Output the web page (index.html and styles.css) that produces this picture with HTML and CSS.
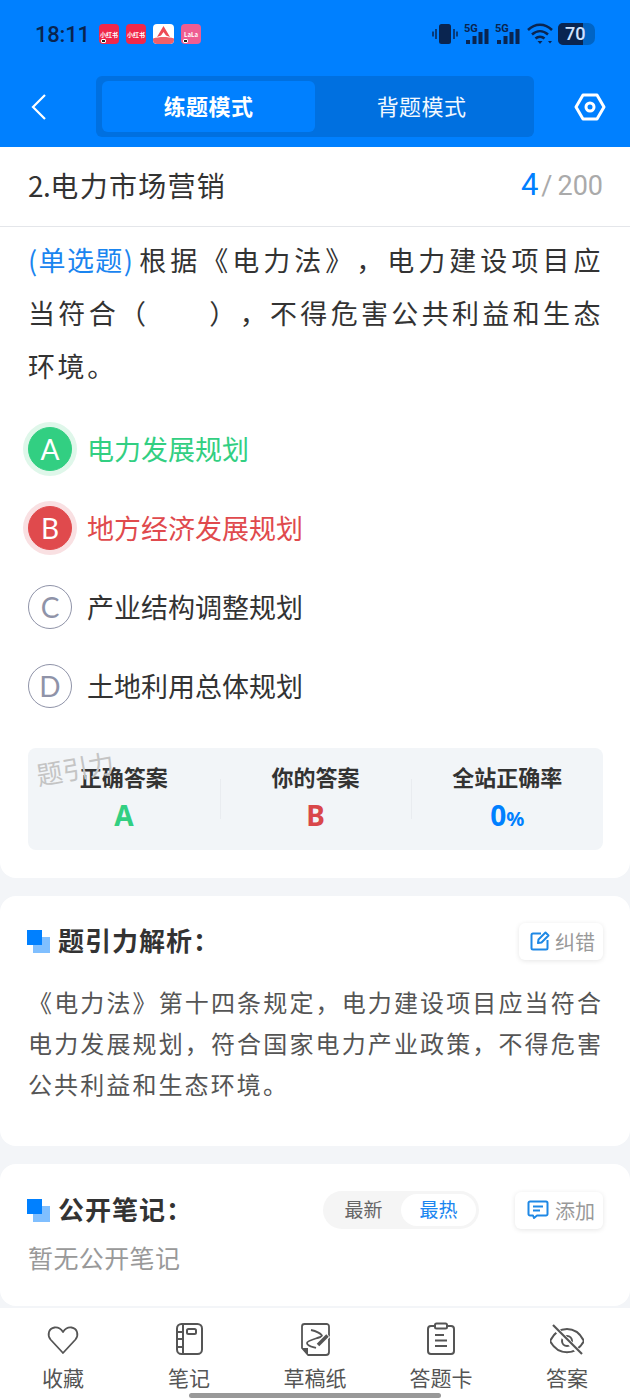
FILE: index.html
```html
<!DOCTYPE html>
<html lang="zh-CN">
  <head>
    <meta charset="UTF-8" />
    <meta name="viewport" content="width=device-width, initial-scale=1.0" />
    <title>练题模式</title>
    <link rel="stylesheet" href="styles.css">
  </head>
  <body>
    <header class="top">
      <div class="status">
        <span class="clock">18:11</span>
        <span class="app app-red"><i>小红书</i><b></b></span>
        <span class="app app-red"><i>小红书</i></span>
        <span class="app app-white">
          <svg width="21" height="20" viewBox="0 0 21 20"><path d="M10.500 2 L17 13 L13 11.500 L10.500 8 L8 11.500 L4 13 Z" fill="#ee4a55"/><path d="M0 14.500 C6 12.500 15 12.500 21 14.500 V17 a3 3 0 0 1 -3 3 H3 a3 3 0 0 1 -3 -3 Z" fill="#f0606a"/></svg>
        </span>
        <span class="app app-pink"><i>LaLa</i><b></b></span>
        <div class="status-right">
          <svg width="26" height="22" viewBox="0 0 26 22"><rect x="7" y="1" width="12" height="20" rx="2.500" fill="#0a2550"/><path d="M1 8.500v5M4 6v10M22 6v10M25 8.500v5" stroke="#0a2550" stroke-width="1.500" fill="none"/></svg>
          <svg class="sig" width="26" height="22" viewBox="0 0 26 22"><text x="0" y="9" class="sig-text">5G</text><rect x="2" y="17" width="4" height="4" fill="#0a2550"/><rect x="8.500" y="13" width="4" height="8" fill="#0a2550"/><rect x="14.500" y="9" width="4" height="12" fill="#0a2550"/><rect x="20.500" y="6" width="4" height="15" fill="#0a2550"/></svg>
          <svg class="sig" width="26" height="22" viewBox="0 0 26 22"><text x="0" y="9" class="sig-text">5G</text><rect x="2" y="17" width="4" height="4" fill="#0a2550"/><rect x="8.500" y="13" width="4" height="8" fill="#0a2550"/><rect x="14.500" y="9" width="4" height="12" fill="#0a2550"/><rect x="20.500" y="6" width="4" height="15" fill="#0a2550"/></svg>
          <svg width="26" height="22" viewBox="0 0 26 22"><path d="M1 7 C8 0 18 0 25 7 M5 11.500 C10 7 16 7 21 11.500 M8.500 15.500 C11 13 15 13 17.500 15.500" stroke="#0a2550" stroke-width="2.500" fill="none"/><path d="M10.500 18 h5 l-2.500 3 Z M21 18 h4 l-2 2.500 Z" fill="#0a2550"/></svg>
          <span class="battery"><span class="battery-fill">70</span></span>
        </div>
      </div>
      <nav class="nav">
        <svg class="back" width="18" height="28" viewBox="0 0 18 28"><path d="M15 2 L3 14 L15 26" stroke="#fff" stroke-width="2.200" fill="none"/></svg>
        <div class="modes">
          <div class="mode mode-on"><span>练题模式</span></div>
          <div class="mode"><span>背题模式</span></div>
        </div>
        <svg class="gear" width="32" height="28" viewBox="0 0 32 28"><path d="M9 2 H23 L30 14 L23 26 H9 L2 14 Z" stroke="#fff" stroke-width="3" fill="none" stroke-linejoin="round"/><circle cx="16" cy="14" r="4" stroke="#fff" stroke-width="3" fill="none"/></svg>
      </nav>
    </header>

    <section class="card card-first">
      <div class="chapter">
        <h2><span class="chapter-no">2.</span>电力市场营销</h2>
        <div class="count"><span class="count-now">4</span><span class="count-sep">/</span><span>200</span></div>
      </div>
      <p class="question"><span class="qtype">(单选题)</span>根据《电力法》，电力建设项目应当符合（&emsp;&emsp;），不得危害公共利益和生态环境。</p>
      <ul class="options">
        <li class="opt opt-right"><span class="letter">A</span>电力发展规划</li>
        <li class="opt opt-wrong"><span class="letter">B</span>地方经济发展规划</li>
        <li class="opt"><span class="letter">C</span>产业结构调整规划</li>
        <li class="opt"><span class="letter">D</span>土地利用总体规划</li>
      </ul>
      <div class="result">
        <span class="watermark">题引力</span>
        <div class="result-col"><div class="result-label">正确答案</div><div class="result-value green">A</div></div>
        <div class="result-col"><div class="result-label">你的答案</div><div class="result-value red">B</div></div>
        <div class="result-col"><div class="result-label">全站正确率</div><div class="result-value blue">0<small>%</small></div></div>
      </div>
    </section>

    <section class="card card-analysis">
      <div class="card-head">
        <span class="squares"></span>
        <h3>题引力解析：</h3>
        <button class="chip">
          <svg width="20" height="20" viewBox="0 0 20 20"><path d="M11 2.500 H3 a1.500 1.500 0 0 0 -1.500 1.500 V17 a1.500 1.500 0 0 0 1.500 1.500 H16 a1.500 1.500 0 0 0 1.500 -1.500 V9 M8 12 L8.500 8.500 L15.500 1.500 L18.500 4.500 L11.500 11.500 Z" stroke="#1e88e5" stroke-width="2" fill="none" stroke-linejoin="round"/></svg>
          纠错
        </button>
      </div>
      <p class="analysis">《电力法》第十四条规定，电力建设项目应当符合电力发展规划，符合国家电力产业政策，不得危害公共利益和生态环境。</p>
    </section>

    <section class="card card-notes">
      <div class="card-head">
        <span class="squares"></span>
        <h3>公开笔记：</h3>
        <div class="sort"><span class="sort-item">最新</span><span class="sort-item sort-on">最热</span></div>
        <button class="chip chip-add">
          <svg width="22" height="20" viewBox="0 0 22 20"><path d="M3 1.500 H19 a1.500 1.500 0 0 1 1.500 1.500 V14 a1.500 1.500 0 0 1 -1.500 1.500 H10 L7 18 L6 15.500 H3 a1.500 1.500 0 0 1 -1.500 -1.500 V3 a1.500 1.500 0 0 1 1.500 -1.500 Z M6 6.500 H16 M6 10.500 H13" stroke="#1e88e5" stroke-width="2" fill="none" stroke-linejoin="round"/></svg>
          添加
        </button>
      </div>
      <p class="empty">暂无公开笔记</p>
    </section>

    <footer class="tabs">
      <div class="tab">
        <svg width="34" height="34" viewBox="0 0 34 34"><path d="M17 31 L4.500 17.500 C1 13 2.500 6.500 8.500 5.500 C12 5 15 7 17 10 C19 7 22 5 25.500 5.500 C31.500 6.500 33 13 29.500 17.500 Z" stroke="#555" stroke-width="1.800" fill="none" stroke-linejoin="round"/></svg>
        收藏
      </div>
      <div class="tab">
        <svg width="34" height="34" viewBox="0 0 34 34"><rect x="5" y="2" width="25" height="30" rx="4.500" stroke="#555" stroke-width="2" fill="none"/><path d="M11 2 V32 M5 10 H11 M5 17 H11 M5 25 H11" stroke="#555" stroke-width="2" fill="none"/><rect x="15" y="7" width="9" height="5" rx="1.500" stroke="#555" stroke-width="2" fill="none"/></svg>
        笔记
      </div>
      <div class="tab">
        <svg width="34" height="34" viewBox="0 0 34 34"><path d="M10 33 H28 a3 3 0 0 0 3 -3 V4.500 a2.500 2.500 0 0 0 -2.500 -2.500 H6.500 a2.500 2.500 0 0 0 -2.500 2.500 V26 Z" stroke="#555" stroke-width="1.800" fill="none" stroke-linejoin="round"/><path d="M4 26 H10 V33 Z" fill="#555"/><path d="M13 8 C18 9 24 12 24 14 C22 16 9 18 9 21 C9 24 15 25 18 26" stroke="#555" stroke-width="1.800" fill="none"/><path d="M20 23 L30 13" stroke="#fff" stroke-width="6" fill="none"/><path d="M20 23 L29.500 13.500" stroke="#555" stroke-width="3.500" fill="none"/></svg>
        草稿纸
      </div>
      <div class="tab">
        <svg width="34" height="34" viewBox="0 0 34 34"><path d="M10 4 H7 a3 3 0 0 0 -3 3 V29 a3 3 0 0 0 3 3 H27 a3 3 0 0 0 3 -3 V7 a3 3 0 0 0 -3 -3 H24" stroke="#555" stroke-width="2" fill="none"/><rect x="11" y="1.500" width="12" height="5" rx="1.500" stroke="#555" stroke-width="2" fill="none"/><path d="M11 13 H20 M11 18.500 H23 M11 24 H23" stroke="#555" stroke-width="2" fill="none"/></svg>
        答题卡
      </div>
      <div class="tab">
        <svg class="eye" width="34" height="34" viewBox="0 0 34 34"><path d="M0 19 C8 3 26 3 34 19 C26 34 8 34 0 19 Z" stroke="#555" stroke-width="2" fill="none"/><circle cx="17" cy="19" r="5" stroke="#555" stroke-width="2" fill="none"/><path d="M2 3 L32 33" stroke="#fff" stroke-width="5" fill="none"/><path d="M3 3 L32 32" stroke="#555" stroke-width="2.200" fill="none"/></svg>
        答案
      </div>
      <span class="home-bar"></span>
    </footer>
  </body>
</html>
```

FILE: styles.css
```css
* {
  box-sizing: border-box;
}

html,
body {
  margin: 0;
  padding: 0;
}

body {
  width: 630px;
  height: 1400px;
  overflow: hidden;
  font-family: 'Noto Sans CJK SC', 'Noto Sans', sans-serif;
  background-color: #f3f5f8;
  color: #333;
}

h2,
h3,
p,
ul {
  margin: 0;
  padding: 0;
}

.top {
  height: 147px;
  background-color: #0080ff;
}

.status {
  display: flex;
  align-items: center;
  height: 68px;
  padding: 0 35px;
  color: #0a2550;
}

.clock {
  width: 64px;
  font-size: 22px;
  letter-spacing: -0.200px;
  font-family: 'Roboto', sans-serif;
  font-weight: 500;
}

.app {
  position: relative;
  display: flex;
  align-items: center;
  justify-content: center;
  width: 20px;
  height: 20px;
  margin-right: 7px;
  border-radius: 4px;
  overflow: hidden;
}

.app i {
  font-style: normal;
  font-size: 6px;
  font-weight: 700;
  color: #fff;
  white-space: nowrap;
}

.app b {
  position: absolute;
  left: 2px;
  bottom: 1px;
  width: 5px;
  height: 4px;
  border: 1px solid #fff;
  background-color: #222;
  border-radius: 1px;
}

.app-red {
  background-color: #f0284a;
}

.app-white {
  width: 21px;
  background-color: #fff;
}

.app-pink {
  background-color: #ef5d92;
}

.status-right {
  display: flex;
  align-items: center;
  gap: 5.500px;
  margin-left: auto;
}

.sig-text {
  font-family: 'Roboto', sans-serif;
  font-size: 11px;
  font-weight: 700;
  fill: #0a2550;
}

.battery {
  display: block;
  width: 37px;
  height: 22px;
  border-radius: 5px 7px 7px 5px;
  background-color: #0064c4;
  overflow: hidden;
}

.battery-fill {
  display: block;
  width: 25px;
  height: 22px;
  background-color: #0a2550;
  color: #cfe3ff;
  font-family: 'Roboto', sans-serif;
  font-size: 18px;
  font-weight: 500;
  line-height: 22px;
  padding-left: 7px;
  white-space: nowrap;
}

.nav {
  display: flex;
  align-items: center;
  height: 61px;
  margin-top: 8px;
  padding: 0 24px 0 30px;
}

.back {
  flex: none;
}

.modes {
  display: flex;
  width: 438px;
  height: 61px;
  margin-left: 48px;
  padding: 5px 6px;
  background-color: #0070e0;
  border-radius: 6px;
}

.mode {
  flex: 1;
  display: flex;
  align-items: center;
  justify-content: center;
  padding-bottom: 4px;
  color: #f2f8ff;
  font-size: 22px;
  letter-spacing: 0.400px;
  border-radius: 6px;
}

.mode-on {
  background-color: #0080ff;
  font-weight: 700;
  color: #fff;
}

.gear {
  flex: none;
  margin-left: auto;
}

.card {
  background-color: #fff;
  border-radius: 16px;
  padding: 0 27px 0 28px;
}

.card-first {
  height: 731px;
  border-radius: 0 0 16px 16px;
}

.chapter {
  display: flex;
  align-items: center;
  justify-content: space-between;
  height: 80px;
  margin: 0 -27px 0 -28px;
  padding: 0 27px 4px 28px;
  border-bottom: 1px solid #e4e6ea;
}

.chapter h2 {
  font-size: 28px;
  font-weight: 400;
  letter-spacing: 1.300px;
}

.chapter-no {
  letter-spacing: -0.500px;
}

.count {
  display: flex;
  align-items: baseline;
  color: #aaa;
  font-size: 27px;
  font-family: 'Roboto', sans-serif;
}

.count-now {
  color: #0080ff;
  font-size: 31px;
}

.count-sep {
  margin: 0 5px 0 3px;
}

.question {
  padding-top: 6px;
  font-size: 27px;
  letter-spacing: 2.600px;
  line-height: 53px;
  text-align: justify;
  text-spacing-trim: space-all;
}

.qtype {
  color: #1a85f0;
  letter-spacing: 0;
  margin-right: 5px;
}

.options {
  list-style: none;
  padding-top: 18px;
}

.opt {
  display: flex;
  align-items: center;
  height: 79px;
  padding-bottom: 2px;
  font-size: 27px;
}

.letter {
  display: flex;
  align-items: center;
  justify-content: center;
  width: 44px;
  height: 44px;
  margin-right: 15px;
  border: 1.500px solid #8f93a8;
  border-radius: 50%;
  color: #8f93a8;
  font-family: 'Lato', sans-serif;
  font-size: 28px;
}

.opt-right {
  color: #32cf82;
}

.opt-right .letter {
  background-color: #32cf82;
  border-color: #32cf82;
  color: #fff;
  box-shadow: 0 0 0 5px #dff7ea;
}

.opt-wrong {
  color: #e04a4d;
}

.opt-wrong .letter {
  background-color: #e04a4d;
  border-color: #e04a4d;
  color: #fff;
  box-shadow: 0 0 0 5px #f9e0e2;
}

.result {
  position: relative;
  display: flex;
  align-items: center;
  height: 102px;
  margin-top: 22px;
  background-color: #f2f5f8;
  border-radius: 8px;
}

.watermark {
  position: absolute;
  left: 8px;
  top: 1px;
  color: #c4c4c4;
  font-size: 26px;
  transform: rotate(-10deg);
}

.result-col {
  flex: 1;
  height: 76px;
  text-align: center;
  background: linear-gradient(#e9ecf0, #e9ecf0) left center / 1px 40px no-repeat;
}

.result-col:first-of-type {
  background: none;
}

.result-label {
  font-size: 22px;
  font-weight: 700;
  line-height: 30px;
}

.result-value {
  margin-top: 5px;
  font-family: 'Noto Sans', sans-serif;
  font-size: 28px;
  font-weight: 700;
  line-height: 38px;
}

.result-value small {
  font-size: 20px;
}

.green {
  color: #32cf82;
}

.red {
  color: #d9474a;
}

.blue {
  color: #0080ff;
}

.card-analysis {
  height: 250px;
  margin-top: 18px;
  padding-top: 26px;
}

.card-head {
  display: flex;
  align-items: center;
  height: 38px;
}

.squares {
  position: relative;
  flex: none;
  width: 23px;
  height: 23px;
  margin-left: -1px;
  margin-right: 8px;
  background: linear-gradient(#0080ff, #0080ff) 0 0 / 15px 15px no-repeat,
    linear-gradient(#80bfff, #80bfff) 6px 7px / 17px 16px no-repeat;
}

.card-head h3 {
  margin-top: -4px;
  font-size: 26px;
  font-weight: 700;
  letter-spacing: 1px;
}

.chip {
  display: flex;
  align-items: center;
  gap: 5px;
  height: 37px;
  margin-left: auto;
  padding: 0 8px 0 11px;
  border: none;
  border-radius: 6px;
  background-color: #fff;
  box-shadow: 0 1px 5px rgba(0, 0, 0, 0.1);
  color: #999;
  font-family: inherit;
  font-size: 20px;
}

.chip-add {
  gap: 6px;
  padding-left: 12px;
}

.analysis {
  padding-top: 21px;
  color: #555;
  font-size: 24px;
  letter-spacing: 2.100px;
  line-height: 41px;
  text-align: justify;
  text-spacing-trim: space-all;
}

.card-notes {
  height: 142px;
  margin-top: 18px;
  padding-top: 27px;
}

.sort {
  display: flex;
  align-items: center;
  width: 156px;
  height: 38px;
  margin-left: auto;
  padding: 3px;
  background-color: #f5f5f5;
  border-radius: 19px;
  font-size: 19px;
  color: #666;
}

.sort-item {
  flex: 1;
  height: 32px;
  line-height: 30px;
  text-align: center;
  border-radius: 16px;
}

.sort-on {
  background-color: #fff;
  color: #1a85f0;
}

.sort + .chip {
  margin-left: 36px;
}

.empty {
  padding-top: 10px;
  color: #999;
  font-size: 25px;
  letter-spacing: 0.400px;
}

.tabs {
  position: relative;
  display: flex;
  justify-content: space-between;
  height: 92px;
  margin-top: 2px;
  padding: 14px 0 0 0;
  background-color: #fff;
}

.tab {
  display: flex;
  flex-direction: column;
  align-items: center;
  width: 126px;
  color: #555;
  font-size: 21px;
  line-height: 30px;
}

.tab svg {
  margin-bottom: 6px;
}

.home-bar {
  position: absolute;
  left: 189px;
  bottom: 2px;
  width: 252px;
  height: 5px;
  border-radius: 3px;
  background-color: #999;
}
```
